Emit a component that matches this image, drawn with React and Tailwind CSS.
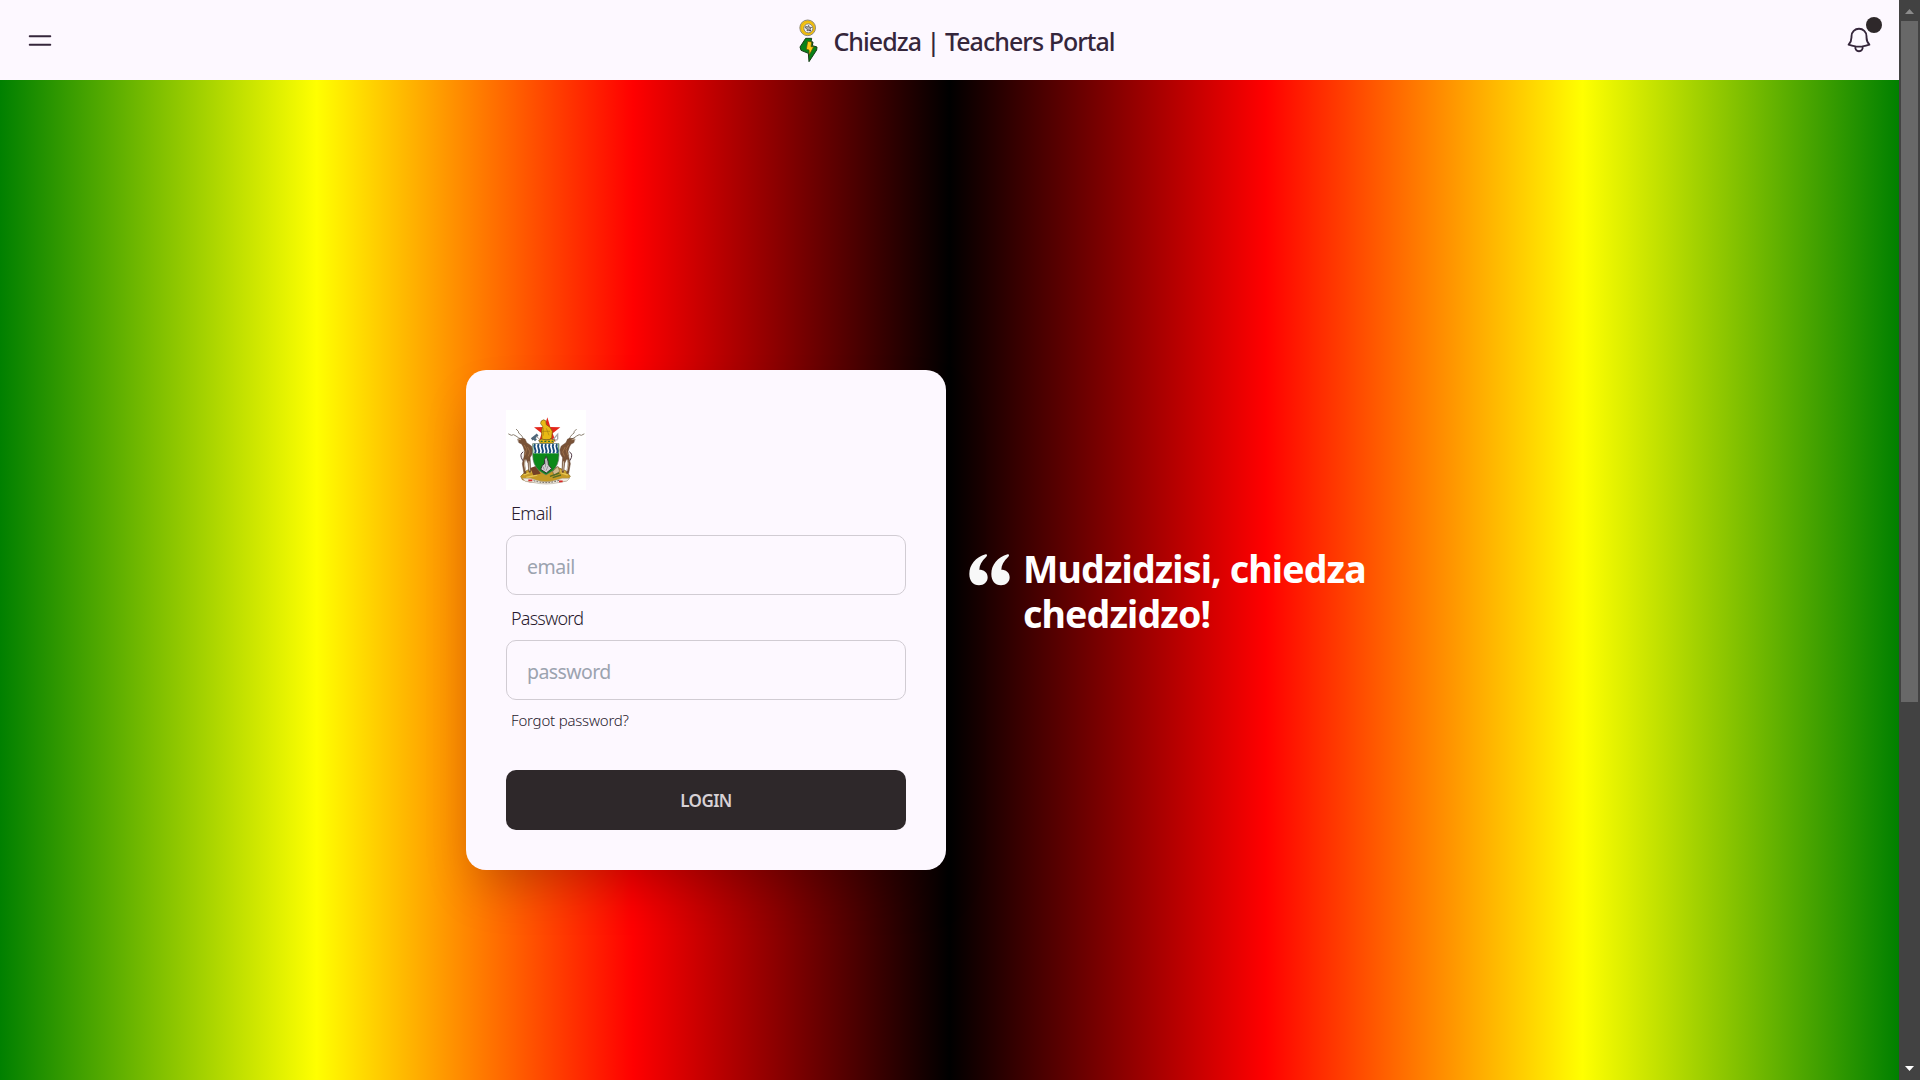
function MenuIcon() {
  return (
    <svg className="size-[30px]" viewBox="0 0 24 24" fill="none" stroke="currentColor" strokeWidth="1.5" strokeLinecap="round" strokeLinejoin="round">
      <path d="M3.75 9h16.5m-16.5 6.75h16.5" />
    </svg>
  );
}

function BellIcon() {
  return (
    <svg className="size-[30px]" viewBox="0 0 24 24" fill="none" stroke="currentColor" strokeWidth="1.5" strokeLinecap="round" strokeLinejoin="round">
      <path d="M14.857 17.082a23.848 23.848 0 0 0 5.454-1.31A8.967 8.967 0 0 1 18 9.75V9A6 6 0 0 0 6 9v.75a8.967 8.967 0 0 1-2.312 6.022c1.733.64 3.56 1.085 5.455 1.31m5.714 0a24.255 24.255 0 0 1-5.714 0m5.714 0a3 3 0 1 1-5.714 0" />
    </svg>
  );
}

/* Coin above a lightning bolt */
function ChiedzaLogo() {
  return (
    <svg className="mt-0.5 h-[44px] w-5 shrink-0" viewBox="0 0 60 132">
      <circle cx="26" cy="26.500" r="23.500" fill="#f5c518" stroke="#8d887a" strokeWidth="3" />
      <circle cx="26" cy="26.500" r="19" fill="none" stroke="#e5ad00" strokeWidth="2" />
      <circle cx="28" cy="28" r="13.500" fill="#f4f4f4" stroke="#77736a" strokeWidth="2.500" />
      <path d="M20 22l6 2 3-5 2 6 7 0-5 5 2 6-6-3-5 3 1-6-6-3z" fill="#aaa" stroke="#444" strokeWidth="2" />
      <path d="M28 35h8" stroke="#444" strokeWidth="2.500" />
      <path d="M20 58h18l-2 10 6 1-2 11 14 4-1 9-23 35-2-25L6 94 3 84z" fill="#088218" stroke="#173b16" strokeWidth="3" strokeLinejoin="round" />
      <path d="M26 67l12 2-2 14h8L31 108l-1-15-8-2z" fill="#ffc914" stroke="#514a08" strokeWidth="2" strokeLinejoin="round" />
    </svg>
  );
}

function Antelope() {
  return (
    <g strokeLinecap="round" strokeLinejoin="round">
      <path d="M50 89Q36 84 30 78Q22 71 16 76L8 72M53 89Q50 79 43 73Q36 70 37 64L31 58" fill="none" stroke="#8b8072" strokeWidth="3" />
      <path d="M36 87l13-2 8 2 5 11 14 10 4 11-2 14-6 10 1 14 1 30h-5l-3-27-6-14-5 13 4 24 1 7h-6l-5-29 5-21 2-16-4-13-5-9-8-4z" fill="#795237" stroke="#5d3d28" strokeWidth="1.500" />
      <path d="M55 106l7 12-5 17M65 112l7 14-5 12" fill="none" stroke="#9c704a" strokeWidth="3" />
      <path d="M57 150l-1 18 3 14M69 155l2 26" fill="none" stroke="#c9bba7" strokeWidth="3" />
      <path d="M51 126q-9 5-5 17l4 8" fill="none" stroke="#4c3541" strokeWidth="3" />
      <path d="M52 132l-2 10" stroke="#eee8e4" strokeWidth="3" />
      <path d="M36 88l8 1" stroke="#d3bda2" strokeWidth="2" />
    </g>
  );
}

/* Zimbabwe coat of arms */
function CoatOfArms() {
  return (
    <svg className="size-20 bg-white" viewBox="0 0 240 240">
      <path d="M124 22l9 29 30 1-23 18 9 25-25-13-25 13 8-25-23-18 31-1z" fill="#e4251b" />
      <path d="M77 88l18-14M80 82l10 9" stroke="#506779" strokeWidth="8" />
      <path d="M92 80l20 17" stroke="#aaa39c" strokeWidth="3" />
      <path d="M133 98l22-25v15M143 91l12-2" fill="none" stroke="#a9a7a9" strokeWidth="4" />
      <path d="M105 34q7-8 14-2l2 12 11 8 7 12-2 19-7 6h-22l-1-27 3-13-6-8z" fill="#e9b915" stroke="#765b0c" strokeWidth="2" />
      <path d="M112 53v24m9-22l8 21m-22-12h25" stroke="#a78213" strokeWidth="2" />
      <path d="M98 91l9-4 15 3 15-3 9 4-5 9h-38z" fill="#e3b512" stroke="#645021" strokeWidth="2" />
      <path d="M104 94h37" stroke="#35702f" strokeWidth="4" strokeDasharray="6 5" />
      <path d="M44 199l17-17 24-10h70l24 10 14 17-11 13-22 4H71l-22-7z" fill="#c69a25" stroke="#806323" strokeWidth="2" />
      <path d="M53 195l25-10m-17 17l33-7m70-7l21 7m-28-13l19 3" stroke="#e6c656" strokeWidth="4" />
      <path d="M73 174l17-6 14 23-22 5z" fill="#744126" />
      <path d="M140 184l16-15 5 15-17 13z" fill="#d3bb91" stroke="#796247" strokeWidth="2" />
      <path d="M132 199l28-10m-20 14l25-8" stroke="#526d25" strokeWidth="4" />
      <Antelope />
      <g transform="translate(242 0) scale(-1 1)">
        <Antelope />
      </g>
      <path d="M80 101h79v34q0 29-18 47l-21 13-21-13q-19-18-19-47z" fill="#0b8918" stroke="#777" strokeWidth="2" />
      <path d="M82 102h75v28H82z" fill="#fff" />
      <path d="M87 102q-4 7 0 14t0 14M98 102q-4 7 0 14t0 14M109 102q-4 7 0 14t0 14M120 102q-4 7 0 14t0 14M131 102q-4 7 0 14t0 14M142 102q-4 7 0 14t0 14M153 102q-4 7 0 14t0 14" fill="none" stroke="#174b7b" strokeWidth="6" />
      <path d="M121 139l5 14 1 11 10 12-16 13-17-11 5-12 6-4 1-14z" fill="#d1ced1" stroke="#343536" strokeWidth="3" />
      <path d="M120 151l-2 21m8-4l-6 14m-9-12l4 9" stroke="#77777b" strokeWidth="2" />
      <path d="M50 205l23 0 19 6q28 9 57 0l20-6 22 0-8 8-21 4q-42 10-83 0l-22-3z" fill="#eee9df" stroke="#a69b87" strokeWidth="1.500" />
      <path d="M67 211h12m80 3h11" stroke="#d92626" strokeWidth="5" />
      <path d="M83 212q38 12 76-1" fill="none" stroke="#5f5b55" strokeWidth="3" strokeDasharray="5 4" />
    </svg>
  );
}

function QuoteIcon() {
  const mark = "M50 1C20 10 1 32 1 60C1 80 12 94 30 94C45 94 56 84 56 70C56 55 44 47 31 47C31 35 38 20 52 8C56 4 54 0 50 1Z";
  return (
    <svg className="mt-[8px] h-8 w-[41px] shrink-0" viewBox="0 0 123 96" fill="#f8f8f8">
      <path d={mark} />
      <path d={mark} transform="translate(66 0)" />
    </svg>
  );
}

function Field({ label, type, tracking, labelTracking }) {
  return (
    <label className="mt-2.5 block">
      <span className={`mb-[9px] block h-[26px] pl-[5px] text-[18px]/[26px] font-light text-[#281a2e] ${labelTracking}`}>{label}</span>
      <input
        type={type}
        placeholder={type}
        className={`block h-[60px] w-full rounded-[10px] border border-[#d1ccd3] bg-transparent px-5 pt-[3px] text-[19.5px] outline-none placeholder:text-[#9ca3af] ${tracking}`}
      />
    </label>
  );
}

function Scrollbar() {
  return (
    <div className="flex w-[21px] shrink-0 flex-col items-center bg-[#424242]">
      <svg className="h-[21px] w-[21px] shrink-0" viewBox="0 0 21 21" fill="#8b8b8b">
        <path d="M6 14L10.500 9L15 14Z" />
      </svg>
      <div className="h-[681px] w-[17px] bg-[#686868]" />
      <svg className="mt-auto h-[21px] w-[21px] shrink-0" viewBox="0 0 21 21" fill="#fff">
        <path d="M6 7L10.500 12L15 7Z" />
      </svg>
    </div>
  );
}

export default function App() {
  return (
    <div className="flex h-screen overflow-hidden bg-[#fdf8ff] font-['Noto_Sans',sans-serif] text-[#35263b]">
      <div className="flex min-w-0 flex-1 flex-col">
        <header className="flex h-20 shrink-0 items-center justify-between px-[25px]">
          <button className="flex w-[80px]" aria-label="Menu">
            <MenuIcon />
          </button>
          <div className="flex items-center pl-[15px]">
            <ChiedzaLogo />
            <h1 className="mt-px ml-[14px] text-[25px] leading-8 font-medium tracking-[-0.97px] whitespace-nowrap">Chiedza | Teachers Portal</h1>
          </div>
          <button className="flex w-[80px] justify-end" aria-label="Notifications">
            <span className="relative block">
              <BellIcon />
              <span className="absolute -top-2 -right-2 size-4 rounded-full bg-[#2e282a]" />
            </span>
          </button>
        </header>

        <main className="min-h-0 flex-1 overflow-hidden">
          <div className="flex h-[1080px] items-center justify-center bg-[linear-gradient(to_right,green,yellow,red,black,red,yellow,green)]">
            <div className="flex w-[967px] items-center">
              <form className="h-[500px] w-[480px] shrink-0 rounded-[20px] bg-[#fdf8ff] p-10 shadow-2xl">
                <CoatOfArms />
                <Field label="Email" type="email" labelTracking="tracking-[-0.65px]" tracking="tracking-[-0.5px]" />
                <Field label="Password" type="password" labelTracking="tracking-[-0.8px]" tracking="tracking-[-0.6px]" />
                <a className="mt-2.5 block pl-[5px] text-[15px]/[20px] font-light tracking-[-0.2px] text-[#281a2e]">Forgot password?</a>
                <button type="button" className="mt-10 flex h-[60px] w-full items-center justify-center rounded-[10px] bg-[#2e282a] pt-0.5 text-[17px] font-semibold tracking-[-0.6px] text-[#d7d1d5]">
                  LOGIN
                </button>
              </form>
              <blockquote className="-mt-[58px] ml-[22.5px] flex items-start text-white">
                <QuoteIcon />
                <p className="ml-[13.5px] w-[360px] text-[37.5px]/[45px] font-bold tracking-[-0.85px]">Mudzidzisi, chiedza chedzidzo!</p>
              </blockquote>
            </div>
          </div>
        </main>
      </div>
      <Scrollbar />
    </div>
  );
}
